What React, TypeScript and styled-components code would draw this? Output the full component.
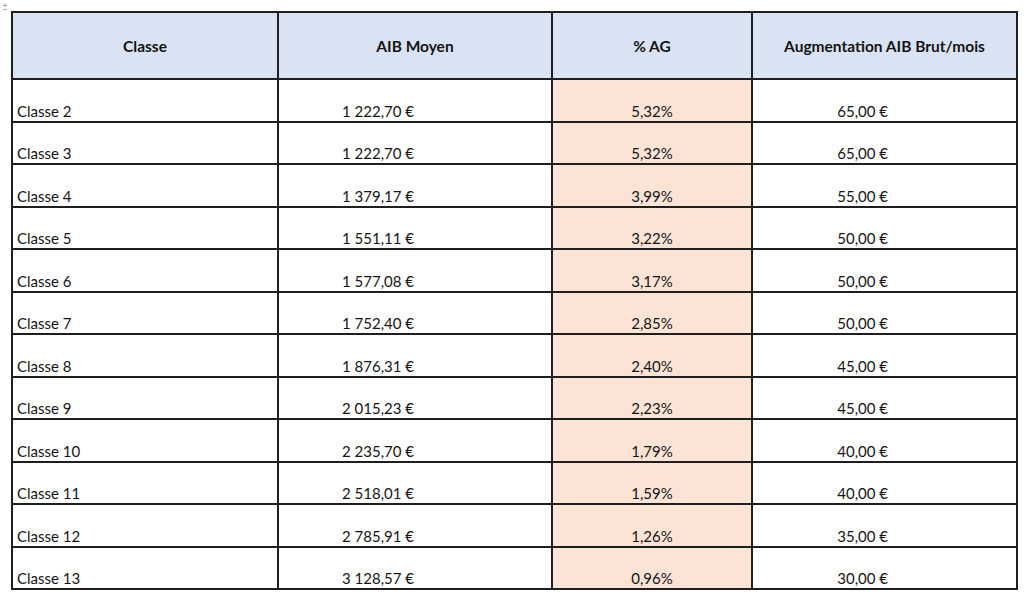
import * as React from "react";
import styled, { createGlobalStyle } from "styled-components";

const GlobalStyle = createGlobalStyle`
  html, body {
    margin: 0;
    padding: 0;
    background: #ffffff;
  }
  body {
    font-family: Lato, "Open Sans", "Liberation Sans", sans-serif;
    color: #141414;
  }
`;

const Page = styled.div`
  padding: 11px 0 0 11px;
`;

const TableWrap = styled.div`
  position: relative;
  width: 1005px;
`;

const Anchor = styled.span`
  position: absolute;
  left: -8px;
  top: -9px;
  font-size: 7px;
  line-height: 7px;
  color: #666;
  border-bottom: 1px solid #aaa;
`;

const Handle = styled.span`
  position: absolute;
  right: -7px;
  bottom: -6px;
  width: 4px;
  height: 4px;
  border: 1px solid #b9b9b9;
`;

const Table = styled.table`
  width: 1005px;
  border-collapse: collapse;
  table-layout: fixed;
  border: 2px solid #1f1f1f;
`;

const HeadCell = styled.th`
  height: 65px;
  padding: 0 4px;
  background: #dae3f3;
  border: 2px solid #1f1f1f;
  font-size: 15.5px;
  font-weight: 700;
  text-align: center;
  vertical-align: middle;
`;

const Row = styled.tr`
  height: 42.5px;
`;

const Cell = styled.td<{ $align?: "left" | "right" | "center"; $pad?: number; $tint?: boolean }>`
  padding: 0 ${(p) => (p.$align === "right" ? p.$pad ?? 4 : 4)}px 1px
    ${(p) => (p.$align === "left" || !p.$align ? p.$pad ?? 4 : 4)}px;
  border: 2px solid #1f1f1f;
  background: ${(p) => (p.$tint ? "#fbe4d5" : "#ffffff")};
  font-size: 15px;
  line-height: 18px;
  text-align: ${(p) => p.$align ?? "left"};
  vertical-align: bottom;
  white-space: nowrap;
`;

const rows = [
  ["Classe 2", "1 222,70 €", "5,32%", "65,00 €"],
  ["Classe 3", "1 222,70 €", "5,32%", "65,00 €"],
  ["Classe 4", "1 379,17 €", "3,99%", "55,00 €"],
  ["Classe 5", "1 551,11 €", "3,22%", "50,00 €"],
  ["Classe 6", "1 577,08 €", "3,17%", "50,00 €"],
  ["Classe 7", "1 752,40 €", "2,85%", "50,00 €"],
  ["Classe 8", "1 876,31 €", "2,40%", "45,00 €"],
  ["Classe 9", "2 015,23 €", "2,23%", "45,00 €"],
  ["Classe 10", "2 235,70 €", "1,79%", "40,00 €"],
  ["Classe 11", "2 518,01 €", "1,59%", "40,00 €"],
  ["Classe 12", "2 785,91 €", "1,26%", "35,00 €"],
  ["Classe 13", "3 128,57 €", "0,96%", "30,00 €"],
];

export default function App() {
  return (
    <Page>
      <GlobalStyle />
      <TableWrap>
        <Anchor>+</Anchor>
        <Table>
          <colgroup>
            <col style={{ width: 266 }} />
            <col style={{ width: 274 }} />
            <col style={{ width: 200 }} />
            <col style={{ width: 265 }} />
          </colgroup>
          <thead>
            <tr>
              <HeadCell>Classe</HeadCell>
              <HeadCell>AIB Moyen</HeadCell>
              <HeadCell>% AG</HeadCell>
              <HeadCell>Augmentation AIB Brut/mois</HeadCell>
            </tr>
          </thead>
          <tbody>
            {rows.map(([classe, aib, ag, aug]) => (
              <Row key={classe}>
                <Cell $align="left" $pad={4}>{classe}</Cell>
                <Cell $align="right" $pad={137}>{aib}</Cell>
                <Cell $align="center" $tint>{ag}</Cell>
                <Cell $align="right" $pad={128}>{aug}</Cell>
              </Row>
            ))}
          </tbody>
        </Table>
        <Handle />
      </TableWrap>
    </Page>
  );
}
